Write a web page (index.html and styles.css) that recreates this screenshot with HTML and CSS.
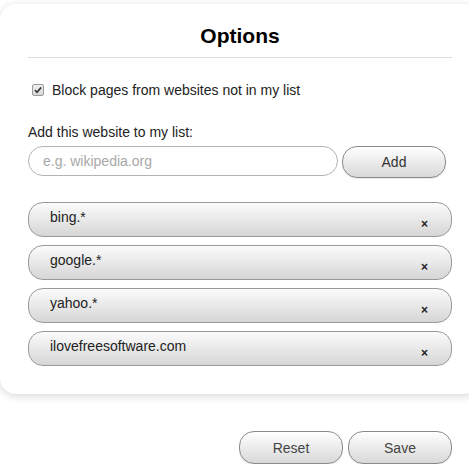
FILE: index.html
```html
<!DOCTYPE html>
<html>
<head>
<meta charset="utf-8">
<title>Options</title>
<link rel="stylesheet" href="styles.css">
</head>
<body>
<div class="panel">
  <h1 class="title">Options</h1>
  <hr class="rule">
  <label class="check-row">
    <svg class="checkbox" width="12" height="12" viewBox="0 0 12 12">
      <defs>
        <linearGradient id="cbg" x1="0" y1="0" x2="0" y2="1">
          <stop offset="0" stop-color="#f2f2f2"/>
          <stop offset="1" stop-color="#d6d6d6"/>
        </linearGradient>
      </defs>
      <rect x="0.5" y="0.5" width="11" height="11" rx="1.5" fill="url(#cbg)" stroke="#9a9a9a"/>
      <path d="M3 6.2 L5 8.3 L9.2 3.4" fill="none" stroke="#3a3a3a" stroke-width="1.7"/>
    </svg>
    <span>Block pages from websites not in my list</span>
  </label>
  <div class="field-label">Add this website to my list:</div>
  <div class="add-row">
    <input class="site-input" type="text" placeholder="e.g. wikipedia.org">
    <button class="btn add-btn">Add</button>
  </div>
  <ul class="site-list">
    <li class="site"><span class="site-name">bing.*</span><span class="remove">×</span></li>
    <li class="site"><span class="site-name">google.*</span><span class="remove">×</span></li>
    <li class="site"><span class="site-name">yahoo.*</span><span class="remove">×</span></li>
    <li class="site"><span class="site-name">ilovefreesoftware.com</span><span class="remove">×</span></li>
  </ul>
</div>
<div class="footer">
  <button class="btn foot-btn">Reset</button>
  <button class="btn foot-btn">Save</button>
</div>
</body>
</html>
```
FILE: styles.css
```css
html, body {
  margin: 0;
  padding: 0;
  overflow: hidden;
  background: #fff;
  font-family: "Liberation Sans", Arial, sans-serif;
  color: #222;
}

.panel {
  width: 480px;
  box-sizing: border-box;
  margin-top: 4px;
  padding: 20px 28px 28px;
  background: #fff;
  border-radius: 16px;
  box-shadow: 0 2px 8px rgba(0, 0, 0, 0.16);
}

.title {
  margin: 0;
  font-size: 21px;
  line-height: 24px;
  font-weight: bold;
  text-align: center;
  color: #000;
}

.rule {
  margin: 9px 0 0;
  border: 0;
  border-top: 1px solid #dcdcdc;
  height: 0;
}

.check-row {
  display: flex;
  align-items: center;
  margin-top: 24px;
  font-size: 14px;
  line-height: 16px;
  color: #222;
}

.checkbox {
  margin-left: 4px;
  margin-right: 8px;
  flex: none;
}

.field-label {
  margin-top: 26px;
  font-size: 14px;
  line-height: 16px;
  color: #222;
}

.add-row {
  display: flex;
  align-items: flex-start;
  gap: 4px;
  margin-top: 6px;
}

.site-input {
  width: 310px;
  height: 30px;
  box-sizing: border-box;
  margin: 0;
  padding: 0 14px;
  border: 1px solid #b4b4b4;
  border-radius: 15px;
  font-family: inherit;
  font-size: 14px;
  color: #222;
  background: #fff;
  outline: none;
}

.site-input::placeholder {
  color: #a8a8a8;
}

.btn {
  box-sizing: border-box;
  margin: 0;
  border: 1px solid #8a8a8a;
  border-radius: 15px;
  background: linear-gradient(#ffffff, #d8d8d8);
  font-family: inherit;
  font-size: 14px;
  color: #333;
  box-shadow: 0 1px 1px rgba(0, 0, 0, 0.08);
}

.add-btn {
  width: 104px;
  height: 32px;
}

.site-list {
  list-style: none;
  margin: 24px 0 0;
  padding: 0;
  display: flex;
  flex-direction: column;
  gap: 8px;
}

.site {
  display: flex;
  justify-content: space-between;
  align-items: flex-start;
  height: 35px;
  box-sizing: border-box;
  padding: 6px 23px 0 21px;
  border: 1px solid #999;
  border-radius: 15px;
  background: linear-gradient(#fbfbfb, #d6d6d6);
  font-size: 14px;
  line-height: 16px;
  color: #222;
}

.remove {
  margin-top: 8px;
  font-size: 12px;
  line-height: 14px;
  font-weight: bold;
  color: #222;
}

.footer {
  width: 480px;
  box-sizing: border-box;
  padding: 0 28px;
  margin-top: 37px;
  display: flex;
  justify-content: flex-end;
  gap: 5px;
}

.foot-btn {
  width: 104px;
  height: 33px;
  color: #444;
}
```
